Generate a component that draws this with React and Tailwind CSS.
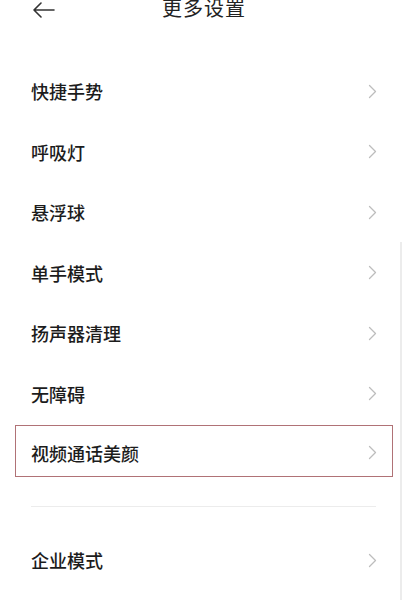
import React from 'react';

const items = ['快捷手势', '呼吸灯', '悬浮球', '单手模式', '扬声器清理', '无障碍'];

const Chevron = () => (
    <svg width="9" height="15" viewBox="0 0 9 15" fill="none" className="shrink-0">
        <path d="M1.5 1.5 L7.5 7.5 L1.5 13.5" stroke="#bdbdbd" strokeWidth="1.3" strokeLinecap="round" strokeLinejoin="round" />
    </svg>
);

const Row = ({ label, className = '' }) => (
    <div className={`flex items-center justify-between pl-[31px] pr-[31px] ${className}`}>
        <span className="text-[18px] font-medium text-[#1c1c1c] leading-none">{label}</span>
        <Chevron />
    </div>
);

const App = () => {
    return (
        <div
            className="relative w-[408px] h-[600px] overflow-hidden bg-white"
            style={{ fontFamily: '"Noto Sans CJK SC", "Noto Sans", sans-serif' }}
        >
            {/* header, partly cut off at the top */}
            <div className="relative h-[16px] flex items-center justify-center">
                <svg width="24" height="16" viewBox="0 0 24 16" fill="none" className="absolute left-[32px] top-[2px]">
                    <path d="M22 8 H2 M9 1 L2 8 L9 15" stroke="#333" strokeWidth="1.6" strokeLinecap="round" strokeLinejoin="round" />
                </svg>
                <span className="text-[20px] leading-none text-[#222] tracking-[1px]">更多设置</span>
            </div>

            <div className="pt-[45px] flex flex-col">
                {items.map((it) => (
                    <Row key={it} label={it} className="h-[60.5px]" />
                ))}

                <div className="mt-[1px] mx-[15px] h-[52px] border-[1.5px] border-[#b07276] flex items-center justify-between pl-[15px] pr-[15px]">
                    <span className="text-[18px] font-medium text-[#1c1c1c] leading-none mt-[3px]">视频通话美颜</span>
                    <div className="mt-[3px]"><Chevron /></div>
                </div>

                <div className="mt-[29px] ml-[31px] mr-[32px] h-px bg-[#ececec]" />

                <Row label="企业模式" className="mt-[23px] h-[60px]" />
            </div>

            {/* scrollbar */}
            <div className="absolute right-[6px] top-[242px] w-[2px] h-[358px] bg-[#ececec]" />
        </div>
    );
};

export default App;
